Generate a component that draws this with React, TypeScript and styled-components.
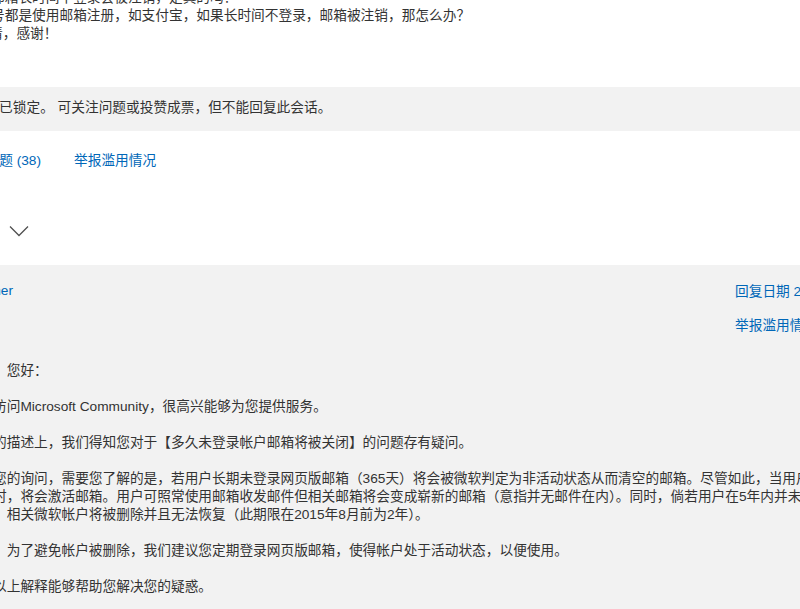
import styled, { createGlobalStyle } from "styled-components"

const GlobalStyle = createGlobalStyle`
    html, body {
        margin: 0;
        padding: 0;
        overflow: hidden;
        background-color: #ffffff;
    }
    body {
        font-family: "Liberation Sans", "Noto Sans CJK SC", sans-serif;
        font-size: 13.7px;
        line-height: 18px;
        color: #333333;
    }
`

const replyParagraphs: string[][] = [
    ["，您好："],
    ["访问Microsoft Community，很高兴能够为您提供服务。"],
    ["的描述上，我们得知您对于【多久未登录帐户邮箱将被关闭】的问题存有疑问。"],
    [
        "您的询问，需要您了解的是，若用户长期未登录网页版邮箱（365天）将会被微软判定为非活动状态从而清空的邮箱。尽管如此，当用户再次登录",
        "时，将会激活邮箱。用户可照常使用邮箱收发邮件但相关邮箱将会变成崭新的邮箱（意指并无邮件在内）。同时，倘若用户在5年内并未登录",
        "，相关微软帐户将被删除并且无法恢复（此期限在2015年8月前为2年）。",
    ],
    ["，为了避免帐户被删除，我们建议您定期登录网页版邮箱，使得帐户处于活动状态，以便使用。"],
    ["以上解释能够帮助您解决您的疑惑。"],
]

export default function App() {
    return (
        <>
            <GlobalStyle />
            <StyledPage>
                <StyledQuestion>
                    <StyledLine $shift={-9}>邮箱长时间不登录会被注销，是真的吗？</StyledLine>
                    <StyledLine $shift={-9}>号都是使用邮箱注册，如支付宝，如果长时间不登录，邮箱被注销，那怎么办？</StyledLine>
                    <StyledLine $shift={-11}>请，感谢！</StyledLine>
                </StyledQuestion>

                <StyledLockNotice>
                    <StyledLine $shift={-42}>此会话已锁定。 可关注问题或投赞成票，但不能回复此会话。</StyledLine>
                </StyledLockNotice>

                <StyledActionRow>
                    <StyledClippedLink href="#">我有相同问题 (38)</StyledClippedLink>
                    <StyledLink href="#">举报滥用情况</StyledLink>
                </StyledActionRow>

                <StyledExpandButton aria-label="展开">
                    <svg width="20" height="12" viewBox="0 0 20 12" fill="none">
                        <path d="M1 1.5 L10 10.5 L19 1.5" stroke="#505050" strokeWidth="1.3" />
                    </svg>
                </StyledExpandButton>

                <StyledReply>
                    <StyledReplyHeader>
                        <div>
                            <StyledAuthor href="#">Lucas Tanner</StyledAuthor>
                        </div>
                        <StyledMeta>
                            <StyledLink href="#">回复日期 2015年9月2日</StyledLink>
                            <StyledLink href="#">举报滥用情况</StyledLink>
                        </StyledMeta>
                    </StyledReplyHeader>

                    <StyledReplyBody>
                        {replyParagraphs.map((lines, i) => (
                            <StyledParagraph key={i}>
                                {lines.map((line, j) => (
                                    <StyledLine key={j}>{line}</StyledLine>
                                ))}
                            </StyledParagraph>
                        ))}
                    </StyledReplyBody>
                </StyledReply>
            </StyledPage>
        </>
    )
}

const StyledPage = styled.div`
    min-height: 100vh;
    display: flex;
    flex-direction: column;
`

const StyledLine = styled.div<{ $shift?: number }>`
    white-space: nowrap;
    margin-left: ${(p) => p.$shift ?? 0}px;
`

const StyledQuestion = styled.div`
    margin: -11px 0 44px;
`

const StyledLockNotice = styled.div`
    background-color: #f2f2f2;
    padding: 12px 0 14px;
`

const StyledLink = styled.a`
    color: #0067b8;
    text-decoration: none;
    white-space: nowrap;
`

const StyledActionRow = styled.div`
    display: flex;
    align-items: center;
    gap: 33px;
    padding-top: 21px;
`

const StyledClippedLink = styled(StyledLink)`
    width: 120px;
    margin-left: -79px;
    text-align: right;
`

const StyledExpandButton = styled.button`
    display: flex;
    width: 20px;
    height: 12px;
    margin: 55px 0 28px 9px;
    padding: 0;
    border: 0;
    background: none;
    cursor: pointer;
`

const StyledReply = styled.section`
    flex: 1;
    background-color: #f2f2f2;
    padding-top: 17px;
`

const StyledReplyHeader = styled.div`
    display: grid;
    grid-template-columns: 735px 1fr;
`

const StyledAuthor = styled(StyledLink)`
    display: block;
    width: 120px;
    margin-left: -107px;
    text-align: right;
`

const StyledMeta = styled.div`
    display: flex;
    flex-direction: column;
    gap: 16px;
    padding-top: 1px;
`

const StyledReplyBody = styled.div`
    margin: 27px 0 0 -7px;
`

const StyledParagraph = styled.div`
    margin-bottom: 18px;
`
